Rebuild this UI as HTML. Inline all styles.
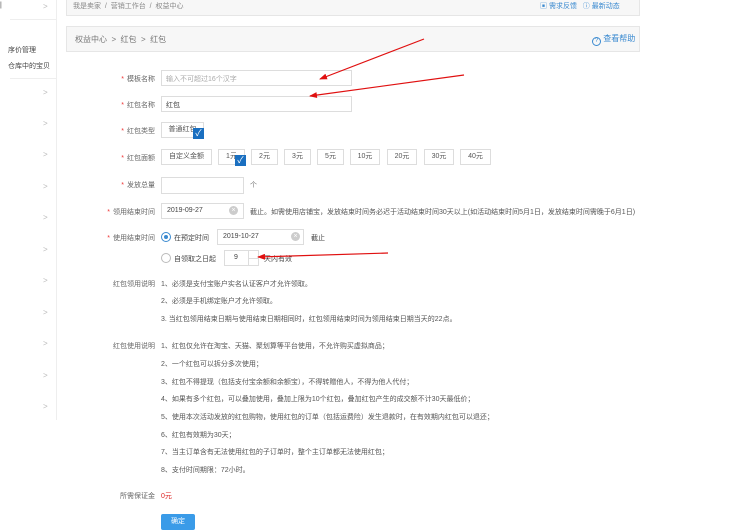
<!DOCTYPE html>
<html><head><meta charset="utf-8"><style>
*{margin:0;padding:0;box-sizing:border-box}
body{width:732px;height:532px;background:#fff;position:relative;overflow:hidden;font-family:"Liberation Sans","Noto Sans CJK SC",sans-serif;font-size:7px;color:#555}
.a{position:absolute;white-space:nowrap}
.box{position:absolute;border:1px solid #ddd;background:#fff}
.lbl{position:absolute;width:100px;left:55px;text-align:right;color:#666}
.lbl b{color:#e33;font-weight:normal;margin-right:3px}
.btn{position:absolute;border:1px solid #ddd;height:16px;line-height:14px;text-align:center;color:#555;background:#fff}
.chk{position:absolute;width:11px;height:11px;background:#1a6fc0;color:#fff;font-size:9px;line-height:11px;text-align:center}
.chev{position:absolute;left:43px;color:#bbb;font-size:8px}
.clr{position:absolute;width:9px;height:9px;border-radius:50%;background:#ccc;color:#fff;font-size:7px;line-height:9px;text-align:center}
.radio{position:absolute;width:10px;height:10px;border-radius:50%;border:1px solid #bbb;background:#fff}
</style></head><body>
<!-- sidebar -->
<div class="a" style="left:56px;top:0;width:1px;height:420px;background:#eee"></div>
<div class="a" style="left:10px;top:19px;width:46px;height:1px;background:#eee"></div>
<div class="a" style="left:10px;top:78px;width:46px;height:1px;background:#eee"></div>
<div class="a" style="left:0;top:2px;color:#444">|</div>
<div class="a" style="left:8px;top:45px;color:#444">序价管理</div>
<div class="a" style="left:8px;top:61px;color:#444">仓库中的宝贝</div>
<div class="chev" style="top:2px">&gt;</div>
<div class="chev" style="top:88px">&gt;</div>
<div class="chev" style="top:119px">&gt;</div>
<div class="chev" style="top:150px">&gt;</div>
<div class="chev" style="top:182px">&gt;</div>
<div class="chev" style="top:213px">&gt;</div>
<div class="chev" style="top:245px">&gt;</div>
<div class="chev" style="top:276px">&gt;</div>
<div class="chev" style="top:308px">&gt;</div>
<div class="chev" style="top:339px">&gt;</div>
<div class="chev" style="top:371px">&gt;</div>
<div class="chev" style="top:402px">&gt;</div>
<!-- top bars -->
<div class="a" style="left:66px;top:-2px;width:574px;height:18px;background:#f7f7f7;border:1px solid #e6e6e6"></div>
<div class="a" style="left:73px;top:1px;color:#888">我是卖家 &nbsp;/&nbsp; 营销工作台 &nbsp;/&nbsp; 权益中心</div>
<div class="a" style="left:540px;top:1px;color:#3a8ad0">▣ 需求反馈 &nbsp; ⓘ 最新动态</div>
<div class="a" style="left:66px;top:26px;width:574px;height:26px;background:#f7f7f7;border:1px solid #e6e6e6"></div>
<div class="a" style="left:75px;top:34px;color:#777;font-size:8px">权益中心 &nbsp;&gt;&nbsp; 红包 &nbsp;&gt;&nbsp; 红包</div>
<div class="a" style="left:592px;top:33px;color:#3a8ad0;font-size:8px"><span style="display:inline-block;width:9px;height:9px;border:1px solid #3a8ad0;border-radius:50%;font-size:6px;line-height:7px;text-align:center;vertical-align:-1px">?</span> 查看帮助</div>
<!-- form -->
<div class="lbl" style="top:74px"><b>*</b>模板名称</div>
<div class="box" style="left:161px;top:70px;width:191px;height:16px"></div>
<div class="a" style="left:166px;top:74px;color:#aaa">输入不可超过16个汉字</div>
<div class="lbl" style="top:100px"><b>*</b>红包名称</div>
<div class="box" style="left:161px;top:96px;width:191px;height:16px"></div>
<div class="a" style="left:166px;top:100px;color:#444">红包</div>
<div class="lbl" style="top:126px"><b>*</b>红包类型</div>
<div class="btn" style="left:161px;top:122px;width:43px">普通红包</div>
<div class="chk" style="left:193px;top:128px">✓</div>
<div class="lbl" style="top:153px"><b>*</b>红包面额</div>
<div class="btn" style="left:161px;top:149px;width:51px">自定义金额</div>
<div class="btn" style="left:218px;top:149px;width:27px">1元</div>
<div class="chk" style="left:235px;top:155px">✓</div>
<div class="btn" style="left:251px;top:149px;width:27px">2元</div>
<div class="btn" style="left:284px;top:149px;width:27px">3元</div>
<div class="btn" style="left:317px;top:149px;width:27px">5元</div>
<div class="btn" style="left:350px;top:149px;width:30px">10元</div>
<div class="btn" style="left:387px;top:149px;width:30px">20元</div>
<div class="btn" style="left:424px;top:149px;width:30px">30元</div>
<div class="btn" style="left:460px;top:149px;width:31px">40元</div>
<div class="lbl" style="top:180px"><b>*</b>发放总量</div>
<div class="box" style="left:161px;top:177px;width:83px;height:17px"></div>
<div class="a" style="left:250px;top:180px;color:#777">个</div>
<div class="lbl" style="top:207px"><b>*</b>领用结束时间</div>
<div class="box" style="left:161px;top:203px;width:83px;height:16px"></div>
<div class="a" style="left:167px;top:207px;color:#444">2019-09-27</div>
<div class="clr" style="left:229px;top:206px">×</div>
<div class="a" style="left:250px;top:207px;color:#555">截止。如需使用店铺宝，发放结束时间务必迟于活动结束时间30天以上(如活动结束时间5月1日，发放结束时间需晚于6月1日)</div>
<div class="lbl" style="top:233px"><b>*</b>使用结束时间</div>
<div class="radio" style="left:161px;top:232px;border-color:#3a8ad0"><div style="margin:2px;width:4px;height:4px;border-radius:50%;background:#3a8ad0"></div></div>
<div class="a" style="left:174px;top:233px;color:#444">在预定时间</div>
<div class="box" style="left:217px;top:229px;width:87px;height:16px"></div>
<div class="a" style="left:223px;top:233px;color:#444">2019-10-27</div>
<div class="clr" style="left:291px;top:232px">×</div>
<div class="a" style="left:311px;top:233px;color:#444">截止</div>
<div class="radio" style="left:161px;top:253px"></div>
<div class="a" style="left:174px;top:254px;color:#444">自领取之日起</div>
<div class="box" style="left:224px;top:250px;width:35px;height:16px"></div>
<div class="a" style="left:248px;top:250px;width:1px;height:16px;background:#ddd"></div>
<div class="a" style="left:248px;top:258px;width:11px;height:1px;background:#ddd"></div>
<div class="a" style="left:234px;top:254px;color:#444">9</div>
<div class="a" style="left:264px;top:254px;color:#444">天内有效</div>
<div class="lbl" style="top:279px">红包领用说明</div>
<div class="a" style="left:161px;top:279px">1、必须是支付宝账户实名认证客户才允许领取。</div>
<div class="a" style="left:161px;top:296px">2、必须是手机绑定账户才允许领取。</div>
<div class="a" style="left:161px;top:314px">3. 当红包领用结束日期与使用结束日期相同时，红包领用结束时间为领用结束日期当天的22点。</div>
<div class="lbl" style="top:341px">红包使用说明</div>
<div class="a" style="left:161px;top:341px">1、红包仅允许在淘宝、天猫、聚划算等平台使用，不允许购买虚拟商品；</div>
<div class="a" style="left:161px;top:359px">2、一个红包可以拆分多次使用；</div>
<div class="a" style="left:161px;top:377px">3、红包不得提现（包括支付宝余额和余额宝），不得转赠他人，不得为他人代付；</div>
<div class="a" style="left:161px;top:394px">4、如果有多个红包，可以叠加使用，叠加上限为10个红包，叠加红包产生的成交额不计30天最低价；</div>
<div class="a" style="left:161px;top:412px">5、使用本次活动发放的红包购物，使用红包的订单（包括运费险）发生退款时，在有效期内红包可以退还；</div>
<div class="a" style="left:161px;top:430px">6、红包有效期为30天；</div>
<div class="a" style="left:161px;top:447px">7、当主订单含有无法使用红包的子订单时，整个主订单都无法使用红包；</div>
<div class="a" style="left:161px;top:465px">8、支付时间期限：72小时。</div>
<div class="lbl" style="top:491px">所需保证金</div>
<div class="a" style="left:161px;top:491px;color:#d22">0元</div>
<div class="a" style="left:161px;top:514px;width:34px;height:16px;background:#3a9be8;border-radius:2px;color:#fff;text-align:center;line-height:16px">确定</div>
<!-- arrows -->
<svg class="a" style="left:0;top:0" width="732" height="532">
<defs><marker id="m" markerWidth="8" markerHeight="6" refX="7" refY="3" orient="auto" markerUnits="userSpaceOnUse"><path d="M0,0 L8,3 L0,6 z" fill="#e01010"/></marker></defs>
<g stroke="#e01010" stroke-width="1.2" fill="none">
<line x1="424" y1="39" x2="320" y2="79" marker-end="url(#m)"/>
<line x1="464" y1="75" x2="310" y2="96" marker-end="url(#m)"/>
<line x1="388" y1="253" x2="258" y2="257" marker-end="url(#m)"/>
</g></svg>
</body></html>
